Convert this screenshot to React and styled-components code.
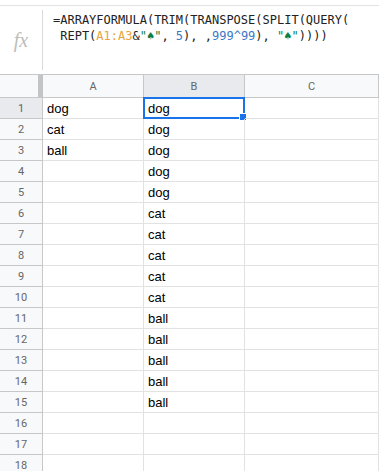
import React from "react";
import styled, { createGlobalStyle } from "styled-components";

const Global = createGlobalStyle`
  html, body { margin: 0; padding: 0; background: #fff; }
  body { font-family: "Liberation Sans", Arial, sans-serif; }
`;

const Page = styled.div`
  width: 379px;
  height: 471px;
  overflow: hidden;
  background: #fff;
`;

const FormulaBar = styled.div`
  margin-top: 5px;
  height: 68px;
  border-top: 1px solid #e3e3e3;
  border-bottom: 1px solid #c7c7c7;
  display: flex;
`;

const FxBox = styled.div`
  width: 43px;
  flex: none;
  display: flex;
  padding: 4px 0 4px;
  box-sizing: border-box;
`;

const FxInner = styled.div`
  flex: 1;
  border-right: 1px solid #dadada;
  display: flex;
  align-items: center;
  justify-content: center;
  padding-top: 0;
  font-family: "Liberation Serif", "Times New Roman", serif;
  font-style: italic;
  font-size: 20px;
  color: #bdbdbd;
`;

const FormulaText = styled.pre`
  margin: 0;
  padding: 6px 0 0 10px;
  font-family: "DejaVu Sans Mono", "Liberation Mono", monospace;
  font-size: 12px;
  line-height: 16px;
  color: #222;
  white-space: pre;
`;

const Tok = styled.span`
  color: ${(p) => p.$c};
`;

const Grid = styled.div`
  display: grid;
  grid-template-columns: 43px 101px 101px 1fr;
`;

const ColHead = styled.div`
  height: 22px;
  border-right: 1px solid #c7c7c7;
  border-bottom: 1px solid #c7c7c7;
  background: ${(p) => (p.$sel ? "#e8eaed" : "#f8f9fa")};
  display: flex;
  align-items: center;
  justify-content: center;
  font-family: Roboto, "Liberation Sans", sans-serif;
  font-size: 11px;
  color: #666;
`;

const Corner = styled.div`
  height: 22px;
  border-bottom: 1px solid #c7c7c7;
  background: #f8f9fa;
  display: flex;
  justify-content: flex-end;
`;

const FreezeBar = styled.div`
  width: 5px;
  background: #c4c4c4;
`;

const RowHead = styled.div`
  height: 20px;
  border-right: 1px solid #c7c7c7;
  border-bottom: 1px solid #c7c7c7;
  background: ${(p) => (p.$sel ? "#e8eaed" : "#f8f9fa")};
  display: flex;
  align-items: center;
  justify-content: center;
  font-family: Roboto, "Liberation Sans", sans-serif;
  font-size: 11px;
  color: #666;
`;

const Cell = styled.div`
  position: relative;
  border-right: 1px solid #e2e2e2;
  border-bottom: 1px solid #e2e2e2;
  padding: 0 4px 2px;
  display: flex;
  align-items: flex-end;
  box-sizing: content-box;
  height: 18px;
  font-family: "Liberation Sans", Arial, sans-serif;
  font-size: 13px;
  color: #000;
  white-space: nowrap;
`;

const Selection = styled.div`
  position: absolute;
  left: -1px;
  top: -1px;
  right: -1px;
  bottom: -1px;
  border: 2px solid #1a73e8;
  pointer-events: none;
`;

const Handle = styled.div`
  position: absolute;
  right: -4px;
  bottom: -4px;
  width: 6px;
  height: 6px;
  background: #1a73e8;
  border: 1px solid #fff;
`;

const colA = ["dog", "cat", "ball"];
const colB = [
  "dog", "dog", "dog", "dog", "dog",
  "cat", "cat", "cat", "cat", "cat",
  "ball", "ball", "ball", "ball", "ball",
];

export default function App() {
  const rows = Array.from({ length: 18 }, (_, i) => i + 1);
  const orange = "#e8a33a";
  const green = "#0b8043";
  const blue = "#3b78c6";
  return (
    <Page>
      <Global />
      <FormulaBar>
        <FxBox>
          <FxInner>fx</FxInner>
        </FxBox>
        <FormulaText>
          {"=ARRAYFORMULA(TRIM(TRANSPOSE(SPLIT(QUERY(\n REPT("}
          <Tok $c={orange}>A1:A3</Tok>
          {"&"}
          <Tok $c={green}>"♠"</Tok>
          {", "}
          <Tok $c={blue}>5</Tok>
          {"), ,"}
          <Tok $c={blue}>999^99</Tok>
          {"), "}
          <Tok $c={green}>"♠"</Tok>
          {"))))"}
        </FormulaText>
      </FormulaBar>
      <Grid>
        <Corner>
          <FreezeBar />
        </Corner>
        <ColHead>A</ColHead>
        <ColHead $sel>B</ColHead>
        <ColHead>C</ColHead>
        {rows.map((r) => (
          <React.Fragment key={r}>
            <RowHead $sel={r === 1}>{r}</RowHead>
            <Cell>{colA[r - 1] || ""}</Cell>
            <Cell>
              {colB[r - 1] || ""}
              {r === 1 && (
                <Selection>
                  <Handle />
                </Selection>
              )}
            </Cell>
            <Cell />
          </React.Fragment>
        ))}
      </Grid>
    </Page>
  );
}
